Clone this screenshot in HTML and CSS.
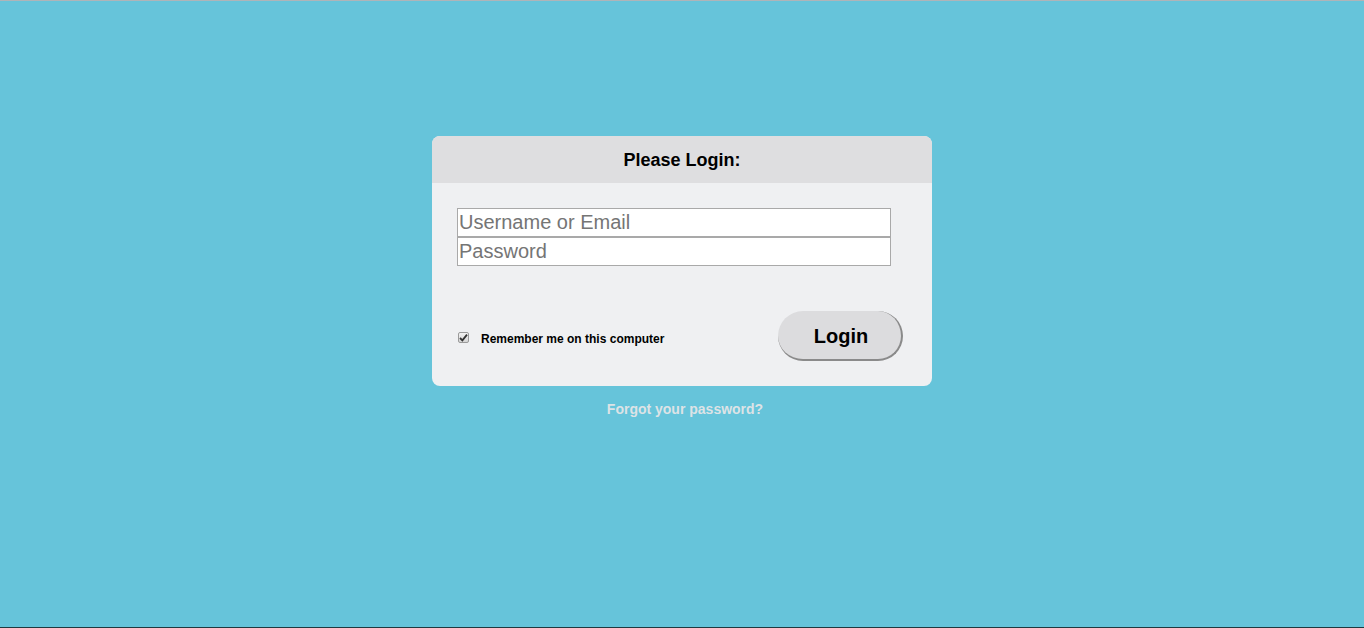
FILE: index.html
```html
<!DOCTYPE html>
<html>
<head>
<meta charset="utf-8">
<link rel="stylesheet" href="styles.css">
</head>
<body>
<div class="page">
  <form class="card">
    <div class="card-header">Please Login:</div>
    <div class="card-body">
      <div class="fields">
        <input class="field" type="text" placeholder="Username or Email">
        <input class="field" type="password" placeholder="Password">
      </div>
      <div class="actions">
        <label class="remember">
          <span class="check"><svg width="9" height="9" viewBox="0 0 9 9"><path d="M1 5 L3.4 7.4 L8 1.6" fill="none" stroke="#333" stroke-width="1.8"/></svg></span>
          <span class="remember-text">Remember me on this computer</span>
        </label>
        <button type="button" class="login-btn">Login</button>
      </div>
    </div>
  </form>
  <a class="forgot" href="#">Forgot your password?</a>
</div>
</body>
</html>
```
FILE: styles.css
```css
html, body {
  margin: 0;
  padding: 0;
  height: 100%;
}
body {
  background: #66c4da;
  font-family: "Liberation Sans", Arial, sans-serif;
  border-top: 1px solid #b0b4b8;
  border-bottom: 1px solid #1e3a40;
  box-sizing: border-box;
}
.page {
  display: flex;
  flex-direction: column;
  align-items: center;
  padding-top: 135px;
}
.card {
  width: 500px;
  margin: 0;
  border-radius: 8px;
  background: #eff0f2;
  overflow: hidden;
}
.card-header {
  height: 47px;
  background: #dedee0;
  display: flex;
  align-items: center;
  justify-content: center;
  font-weight: bold;
  font-size: 18px;
  color: #000;
  padding-top: 1px;
  box-sizing: border-box;
}
.card-body {
  padding: 25px 29px 25px 25px;
}
.fields {
  display: flex;
  flex-direction: column;
  width: 434px;
}
.field {
  box-sizing: border-box;
  width: 434px;
  height: 29px;
  margin: 0;
  border: 1px solid #a9a9a9;
  background: #fff;
  font-family: "Liberation Sans", Arial, sans-serif;
  font-size: 20px;
  padding: 0 1px;
  outline: none;
}
.field::placeholder {
  color: #757575;
}
.actions {
  display: flex;
  align-items: center;
  justify-content: space-between;
  margin-top: 45px;
}
.remember {
  display: flex;
  align-items: center;
  padding-left: 1px;
  padding-top: 6px;
}
.check {
  width: 11px;
  height: 11px;
  box-sizing: border-box;
  border: 1px solid #9a9a9a;
  border-radius: 2px;
  background: linear-gradient(#f2f2f2, #d6d6d6);
  display: flex;
  align-items: center;
  justify-content: center;
  margin-top: -3px;
}
.remember-text {
  margin-left: 12px;
  font-size: 12px;
  font-weight: bold;
  color: #000;
}
.login-btn {
  width: 125px;
  height: 50px;
  border-radius: 25px;
  background: #dcdcde;
  border: none;
  border-right: 2px solid #8a8a8a;
  border-bottom: 2px solid #8a8a8a;
  font-family: "Liberation Sans", Arial, sans-serif;
  font-weight: bold;
  font-size: 20px;
  color: #000;
  padding: 2px 0 0 3px;
  cursor: pointer;
}
.forgot {
  margin-top: 15px;
  margin-left: 6px;
  font-size: 14px;
  font-weight: bold;
  color: #dde3e6;
  text-decoration: none;
}
```
